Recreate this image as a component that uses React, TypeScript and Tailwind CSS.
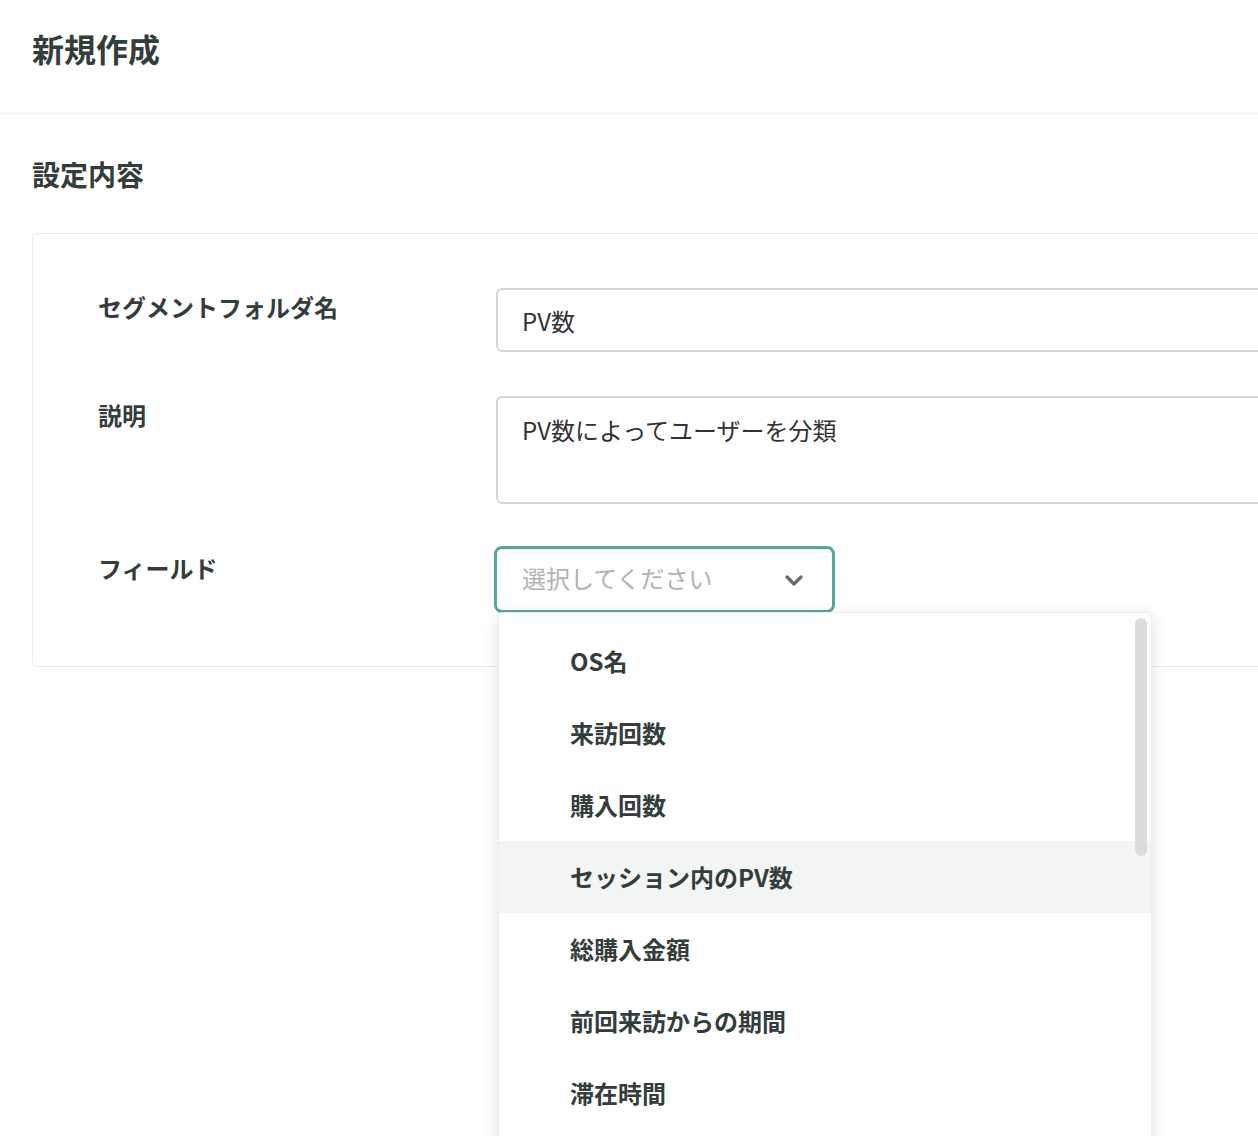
import React from "react";

const OPTIONS = [
  "OS名",
  "来訪回数",
  "購入回数",
  "セッション内のPV数",
  "総購入金額",
  "前回来訪からの期間",
  "滞在時間",
];

const FONT = "font-['Noto_Sans_CJK_JP','Noto_Sans',sans-serif]";

function ChevronDown() {
  return (
    <svg width="20" height="14" viewBox="0 0 20 14" fill="none">
      <polyline
        points="3,4 10,11 17,4"
        stroke="#666b6a"
        strokeWidth="3.2"
        strokeLinecap="round"
        strokeLinejoin="round"
      />
    </svg>
  );
}

export default function App() {
  const highlighted = "セッション内のPV数";

  return (
    <div className={`w-[1258px] h-[1136px] overflow-hidden bg-white text-[#333d3b] ${FONT}`}>
      <header className="h-[114px] border-b border-[#ececec] px-8 pt-[24px]">
        <h1 className="text-[32px] font-bold leading-[48px]">新規作成</h1>
      </header>

      <section className="px-8 pt-[40px]">
        <h2 className="text-[28px] font-bold leading-[40px]">設定内容</h2>

        <div className="mt-[39px] w-[1300px] h-[434px] border border-[#e9ebea] rounded-[6px] pt-[54px] pl-[65px]">
          <div className="flex flex-col gap-[44px]">
            <div className="flex">
              <label className="w-[398px] shrink-0 pt-[1px] text-[24px] font-bold leading-[36px]">
                セグメントフォルダ名
              </label>
              <input
                readOnly
                value="PV数"
                className="w-[800px] h-[64px] border-2 border-[#d4d6d5] rounded-[6px] px-[24px] text-[24px] text-[#333] outline-none"
              />
            </div>

            <div className="flex">
              <label className="w-[398px] shrink-0 pt-[1px] text-[24px] font-bold leading-[36px]">
                説明
              </label>
              <textarea
                readOnly
                value="PV数によってユーザーを分類"
                className="w-[800px] h-[108px] border-2 border-[#d4d6d5] rounded-[6px] px-[24px] pt-[14px] text-[24px] leading-[36px] text-[#333] outline-none resize-none"
              />
            </div>

            <div className="flex">
              <label className="w-[398px] shrink-0 pt-[2px] text-[24px] font-bold leading-[36px]">
                フィールド
              </label>
              <div className="relative -mt-[2px]">
                <div className="-ml-[2px] w-[341px] h-[67px] border-[3px] border-[#55a99c] rounded-[8px] flex items-center justify-between pl-[25px] pr-[28px]">
                  <span className="pb-[3px] text-[24px] leading-[36px] text-[#b0b3b2]">選択してください</span>
                  <ChevronDown />
                </div>

                <div className="absolute left-[2px] top-[66px] z-10 w-[654px] h-[560px] overflow-hidden bg-white border border-[#eceeed] rounded-[4px] shadow-[0_4px_16px_rgba(0,0,0,0.12)] pt-[12px]">
                  {OPTIONS.map((opt) => (
                    <div
                      key={opt}
                      className={`h-[72px] flex items-center pl-[71px] text-[24px] font-bold ${
                        opt === highlighted ? "bg-[#f3f5f4]" : ""
                      }`}
                    >
                      {opt}
                    </div>
                  ))}
                  <div className="absolute right-[4px] top-[5px] w-[12px] h-[238px] rounded-full bg-[#dcdcde]" />
                </div>
              </div>
            </div>
          </div>
        </div>
      </section>
    </div>
  );
}
